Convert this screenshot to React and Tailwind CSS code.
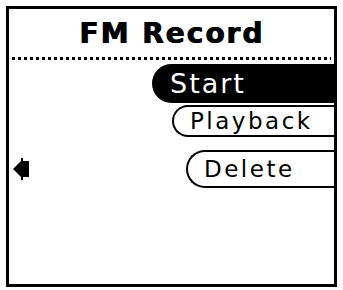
import React from 'react';

const items = [
  { label: 'Start', left: 143, selected: true },
  { label: 'Playback', left: 163, h: 32, mt: 2 },
  { label: 'Delete', left: 177, h: 38, mt: 13, arrow: true },
];

const Arrow = () => (
  <svg width="16" height="22" viewBox="0 0 16 22" className="absolute left-[4px] top-1/2 -translate-y-1/2">
    <path d="M0 11 L8 3 L8 0 L10 0 L10 3 L16 3 L16 19 L10 19 L10 22 L8 22 L8 19 Z" fill="#000" />
  </svg>
);

const MenuItem = ({ label, left, selected, arrow, h, mt }) => (
  <div className="relative flex" style={{ marginTop: mt || 0 }}>
    {arrow && <Arrow />}
    {selected ? (
      <div
        className="flex flex-1 items-center h-[39px] rounded-l-full bg-black text-white pl-[18px]"
        style={{ marginLeft: left }}
      >
        <span className="text-[27px] leading-none tracking-[2px]">{label}</span>
      </div>
    ) : (
      <div
        className="flex flex-1 items-center rounded-l-full border-[2px] border-r-0 border-black text-black pl-[16px]"
        style={{ marginLeft: left, height: h }}
      >
        <span className="text-[23px] leading-none tracking-[2.5px]">{label}</span>
      </div>
    )}
  </div>
);

const App = () => {
  return (
    <div className="w-[343px] h-[290px] bg-white p-[6px] font-['DejaVu_Sans',sans-serif]">
      <div className="w-[331px] h-[281px] border-[3px] border-black flex flex-col">
        <div className="h-[48px] flex items-center justify-center">
          <h1 className="text-[28px] font-bold tracking-[2px] leading-none pt-[2px] [text-shadow:1px_0_0_#000]">
            FM Record
          </h1>
        </div>
        <div className="mx-[3px] h-[3px] bg-[repeating-linear-gradient(90deg,#000_0_3px,transparent_3px_6px)]"></div>
        <div className="flex flex-col pt-[4px]">
          {items.map((item) => (
            <MenuItem key={item.label} {...item} />
          ))}
        </div>
      </div>
    </div>
  );
};

export default App;
